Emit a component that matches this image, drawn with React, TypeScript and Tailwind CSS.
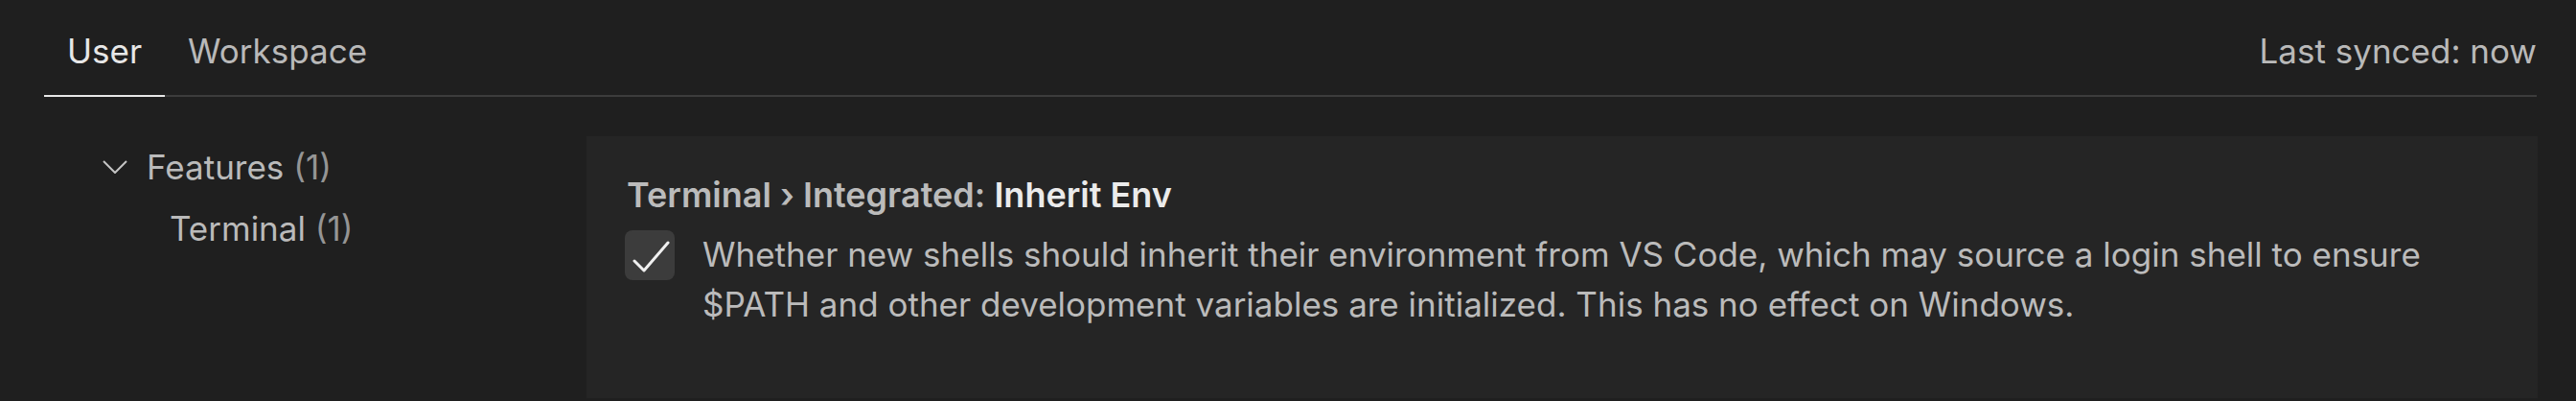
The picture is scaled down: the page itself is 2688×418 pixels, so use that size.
import React from "react";

const font = { fontFamily: "Inter, 'Noto Sans', sans-serif" };

const Chevron: React.FC = () => (
  <svg width="26" height="14" viewBox="0 0 26 14" className="shrink-0">
    <polyline points="1,1 13,13 25,1" fill="none" stroke="#c4c4c4" strokeWidth="2" />
  </svg>
);

const Check: React.FC = () => (
  <svg width="52" height="52" viewBox="0 0 52 52">
    <polyline points="10,32 20,42 45,13" fill="none" stroke="#f0f0f0" strokeWidth="3" strokeLinejoin="round" strokeLinecap="round" />
  </svg>
);

const App: React.FC = () => {
  return (
    <div className="w-[2688px] h-[418px] bg-[#1f1f1f] overflow-hidden" style={font}>
      {/* Tabs */}
      <div className="ml-[46px] mr-[41px] h-[101px] flex items-end border-b-2 border-[#3c3c3c] text-[35px] leading-[44px]">
        <div className="px-[24px] pb-[24px] -mb-[2px] border-b-2 border-[#e7e7e7] text-[#e7e7e7]">User</div>
        <div className="px-[24px] pb-[24px] text-[#b9b9b9]">Workspace</div>
        <div className="ml-auto pb-[24px] text-[#b9b9b9]">Last synced: now</div>
      </div>

      <div className="flex items-start mt-[41px]">
        {/* Tree */}
        <div className="w-[612px] shrink-0 pl-[107px] text-[35px] leading-[64px]">
          <div className="flex items-center gap-[20px] text-[#bababa]">
            <Chevron />
            <span>
              Features <span className="text-[#959595]">(1)</span>
            </span>
          </div>
          <div className="pl-[70px] text-[#bababa]">
            Terminal <span className="text-[#959595]">(1)</span>
          </div>
        </div>

        {/* Setting */}
        <div className="flex-1 mr-[40px] h-[273px] bg-[#252525] pl-[42px] pt-[39px]">
          <div className="text-[36px] leading-[44px] font-semibold text-[#bbbbbb]">
            Terminal › Integrated: <span className="text-[#ebebeb]">Inherit Env</span>
          </div>
          <div className="flex items-start gap-[29px] mt-[14px]">
            <div className="mt-[1px] w-[52px] h-[52px] rounded-[8px] bg-[#3c3c3c] shrink-0 -ml-[2px]">
              <Check />
            </div>
            <div className="text-[35px] leading-[52px] text-[#bbbbbb]">
              Whether new shells should inherit their environment from VS Code, which may source a login shell to ensure
              <br />
              $PATH and other development variables are initialized. This has no effect on Windows.
            </div>
          </div>
        </div>
      </div>
    </div>
  );
};

export default App;
